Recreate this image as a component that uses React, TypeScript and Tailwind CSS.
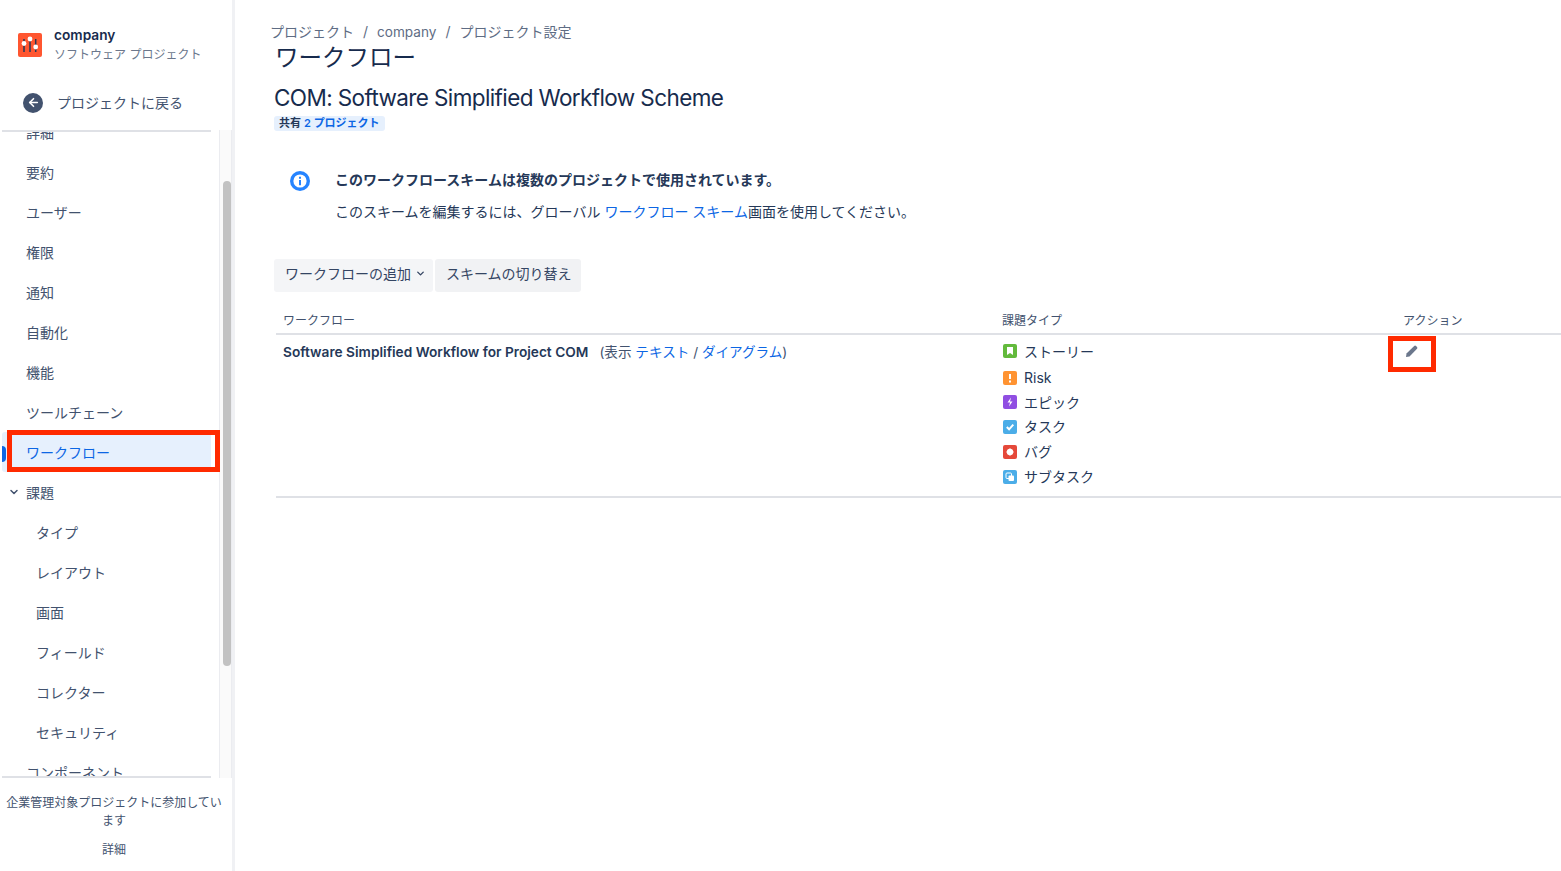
import { ArrowLeft, ChevronDown } from 'lucide-react'

const font = "font-['Inter','Noto_Sans_CJK_JP',sans-serif]"

const topItems = ['詳細', '要約', 'ユーザー', '権限', '通知', '自動化', '機能', 'ツールチェーン']
const issueItems = ['タイプ', 'レイアウト', '画面', 'フィールド', 'コレクター', 'セキュリティ']

function ProjectLogo() {
  return (
    <svg width="24" height="24" viewBox="0 0 24 24" className="shrink-0">
      <rect width="24" height="24" rx="2" fill="#ff5630" />
      <path d="M6 6v13M12 4v15M17.7 6v13" stroke="#253858" strokeWidth="1.5" />
      <circle cx="6" cy="10.5" r="2.4" fill="#fff" />
      <circle cx="12" cy="6" r="2.4" fill="#fff" />
      <circle cx="17.7" cy="14" r="2.4" fill="#fff" />
    </svg>
  )
}

function InfoIcon() {
  return (
    <svg width="20" height="20" viewBox="0 0 20 20" className="mt-[1px] shrink-0">
      <circle cx="10" cy="10" r="10" fill="#2684ff" />
      <circle cx="10" cy="10" r="6.6" fill="#fff" />
      <path d="M9 9h2v5.2H9zM9 5.8h2v2H9z" fill="#2684ff" />
    </svg>
  )
}

function Sidebar() {
  return (
    <aside className="relative flex h-[871px] w-[235px] shrink-0 flex-col border-r-[3px] border-[#f0f1f4] bg-white">
      <div className="flex h-[130px] shrink-0 flex-col">
        <div className="flex items-center gap-3 pl-[18px] pt-[26px]">
          <ProjectLogo />
          <div className="leading-[19px]">
            <div className="text-[13.7px] font-semibold text-[#172b4d]">company</div>
            <div className="text-[12px] text-[#6b778c]">ソフトウェア プロジェクト</div>
          </div>
        </div>
        <div className="mt-[28px] flex items-center gap-[14px] pl-[23px] text-[14px] text-[#42526e]">
          <span className="flex h-5 w-5 items-center justify-center rounded-full bg-[#42526e]">
            <ArrowLeft size={13} strokeWidth={3} className="text-white" />
          </span>
          プロジェクトに戻る
        </div>
      </div>

      <div className="relative flex h-[648px] min-h-0">
        <div className="w-[219px] pl-[2px] pr-[8px]">
          <div className="h-full overflow-hidden border-y-2 border-[#dfe1e6] text-[14px] text-[#42526e]">
            <div className="-mt-[20px]">
              {topItems.map((t) => (
                <div key={t} className="flex h-10 items-center pl-[24px]">{t}</div>
              ))}
              <div className="flex h-10 items-center rounded-[3px] bg-[#e6f0fd] pl-[24px] text-[#0c66e4]">
                ワークフロー
              </div>
              <div className="flex h-10 items-center pl-[6px]">
                <ChevronDown size={12} strokeWidth={3} className="mr-[6px]" />
                課題
              </div>
              {issueItems.map((t) => (
                <div key={t} className="flex h-10 items-center pl-[34px]">{t}</div>
              ))}
              <div className="flex h-10 items-center pl-[24px]">コンポーネント</div>
            </div>
          </div>
        </div>
        <div className="w-[13px] border-x border-[#ebecf0] bg-[#fafafa] pl-[3px] pt-[51px]">
          <div className="h-[485px] w-2 rounded-full bg-[#c2c2c2]" />
        </div>
      </div>

      <div className="pl-[3px] pr-[7px] pt-[16px] text-center text-[12px] leading-[18px] text-[#42526e]">
        <p>企業管理対象プロジェクトに参加しています</p>
        <p className="mt-[11px]">詳細</p>
      </div>

      <div className="absolute left-[7px] top-[430px] h-[42px] w-[213px] border-[5px] border-[#ff2a00]" />
      <div className="absolute left-[2px] top-[446px] h-[16px] w-1 rounded-r bg-[#0c66e4]" />
    </aside>
  )
}

function Story() {
  return (
    <svg width="14" height="14" viewBox="0 0 14 14"><rect width="14" height="14" rx="2" fill="#63ba3c" /><path d="M4 3h6v8L7 9l-3 2z" fill="#fff" /></svg>
  )
}
function Risk() {
  return (
    <svg width="14" height="14" viewBox="0 0 14 14"><rect width="14" height="14" rx="2" fill="#ff9331" /><path d="M6 3h2v5H6zM6 9.5h2v2H6z" fill="#fff" /></svg>
  )
}
function Epic() {
  return (
    <svg width="14" height="14" viewBox="0 0 14 14"><rect width="14" height="14" rx="2" fill="#904ee2" /><path d="M8 2.5 4.5 7.5H7L6 11.5l3.5-5H7z" fill="#fff" /></svg>
  )
}
function Task() {
  return (
    <svg width="14" height="14" viewBox="0 0 14 14"><rect width="14" height="14" rx="2" fill="#4bade8" /><path d="m3.8 7 2.3 2.3 4.2-4.6" stroke="#fff" strokeWidth="2" fill="none" /></svg>
  )
}
function Bug() {
  return (
    <svg width="14" height="14" viewBox="0 0 14 14"><rect width="14" height="14" rx="2" fill="#e5493a" /><circle cx="7" cy="7" r="3.2" fill="#fff" /><path d="M3.2 7h7.6M7 3.2v7.6" stroke="#fff" strokeWidth="0.8" /></svg>
  )
}
function Subtask() {
  return (
    <svg width="14" height="14" viewBox="0 0 14 14"><rect width="14" height="14" rx="2" fill="#4bade8" /><rect x="3" y="3" width="5.5" height="5.5" rx="1" fill="none" stroke="#fff" /><rect x="5.5" y="5.5" width="5.5" height="5.5" rx="1" fill="#fff" /></svg>
  )
}

const issueTypes = [
  { name: 'ストーリー', icon: <Story />, h: 'h-[26px] pb-[2px]' },
  { name: 'Risk', icon: <Risk />, h: 'h-[25px]' },
  { name: 'エピック', icon: <Epic />, h: 'h-[24px]' },
  { name: 'タスク', icon: <Task />, h: 'h-[25px]' },
  { name: 'バグ', icon: <Bug />, h: 'h-[25px]' },
  { name: 'サブタスク', icon: <Subtask />, h: 'h-[25px]' },
]

export default function App() {
  return (
    <div className={`flex h-[871px] w-[1561px] overflow-hidden bg-white ${font}`}>
      <Sidebar />
      <main className="min-w-0 flex-1 text-[#172b4d]">
        <div className="pl-[35px] pt-[22px] text-[14px] leading-[19px] text-[#5e6c84]">
          プロジェクト<span className="mx-[9px]">/</span><span className="text-[13.6px]">company</span><span className="mx-[9px]">/</span>プロジェクト設定
        </div>
        <h1 className="mt-[2px] pl-[40px] text-[23.5px] leading-[28px] text-[#172b4d]">ワークフロー</h1>
        <h2 className="mt-[12px] pl-[39px] text-[22.5px] leading-[28px] tracking-[-0.61px] text-[#172b4d]">COM: Software Simplified Workflow Scheme</h2>
        <div className="ml-[39px] mt-[4px] flex h-[15px] w-[111px] items-center rounded-[3px] bg-[#e6f0fd] pl-[5px] text-[11px] font-semibold text-[#253858]">
          共有<span className="ml-[3px] text-[#0c66e4]">2 プロジェクト</span>
        </div>

        <div className="ml-[55px] mt-[39px] flex">
          <InfoIcon />
          <div className="ml-[25px] text-[14px]">
            <p className="font-bold leading-[20px] text-[#253858]">このワークフロースキームは複数のプロジェクトで使用されています。</p>
            <p className="mt-[12px] leading-[20px] text-[#253858]">
              このスキームを編集するには、グローバル <span className="text-[#0c66e4]">ワークフロー スキーム</span>画面を使用してください。
            </p>
          </div>
        </div>

        <div className="ml-[39px] mt-[37px] flex gap-[2px] text-[14px] text-[#344563]">
          <div className="flex h-[33px] w-[159px] items-center rounded-[3px] bg-[#f4f5f7] pb-[5px] pl-[11px]">
            ワークフローの追加
            <ChevronDown size={11} strokeWidth={3} className="ml-[4px]" />
          </div>
          <div className="flex h-[33px] w-[146px] items-center rounded-[3px] bg-[#f1f2f4] pb-[5px] pl-[11px]">スキームの切り替え</div>
        </div>

        <div className="ml-[41px] mt-[14px]">
          <div className="flex h-[29px] items-center border-b-2 border-[#dfe1e6] pt-[2px] text-[12px] text-[#42526e]">
            <div className="w-[719px] pl-[7px]">ワークフロー</div>
            <div className="w-[401px] pl-[7px]">課題タイプ</div>
            <div className="pl-[7px]">アクション</div>
          </div>
          <div className="flex h-[163px] border-b-2 border-[#dfe1e6] text-[14px]">
            <div className="w-[719px] pl-[7px] pt-[7px] text-[13.6px] leading-[20px]">
              <span className="text-[13.7px] font-semibold text-[#253858]">Software Simplified Workflow for Project COM</span>
              <span className="ml-[11px] text-[#42526e]">(表示 </span>
              <span className="text-[#0c66e4]">テキスト</span>
              <span className="text-[#42526e]"> / </span>
              <span className="text-[#0c66e4]">ダイアグラム</span>
              <span className="text-[#42526e]">)</span>
            </div>
            <div className="w-[401px] pl-[8px] pt-[4px]">
              {issueTypes.map((t) => (
                <div key={t.name} className={`flex items-center gap-[7px] ${t.h}`}>
                  {t.icon}
                  <span className="text-[#253858]">{t.name}</span>
                </div>
              ))}
            </div>
            <div className="relative pl-[9px] pt-[9px]">
              <svg width="14" height="14" viewBox="0 0 14 14">
                <path d="M1.5 9.5 9.2 2a1.3 1.3 0 0 1 1.8 0l1 1a1.3 1.3 0 0 1 0 1.8L4.5 12.5l-3.5.5z" fill="#6b778c" />
              </svg>
              <div className="absolute left-[-8px] top-[1px] h-[36px] w-[48px] border-[5px] border-[#ff2a00]" />
            </div>
          </div>
        </div>
      </main>
    </div>
  )
}
